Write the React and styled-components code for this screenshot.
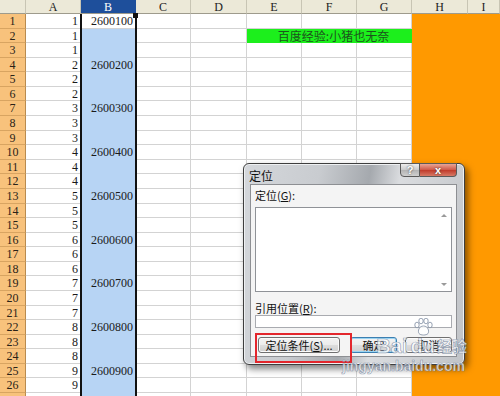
import styled, { createGlobalStyle } from "styled-components";

const GlobalStyle = createGlobalStyle`
  html, body { margin: 0; padding: 0; background: #fff; }
  body { width: 500px; height: 396px; overflow: hidden; }
`;

const Page = styled.div`
  position: relative;
  width: 500px;
  height: 396px;
  overflow: hidden;
  font-family: "Liberation Serif", "Noto Sans CJK SC", serif;
  font-size: 12px;
  color: #1a1a1a;
`;

const Sheet = styled.div`
  display: grid;
  grid-template-columns: 26px 55px 55px 55px 56px 55px 55px 55px 56px 32px;
  grid-template-rows: 14px repeat(27, 14.58px);
`;

const ColHead = styled.div`
  box-sizing: border-box;
  background: ${(p) => (p.$active ? "#1e4f9b" : "#ece9d8")};
  color: ${(p) => (p.$active ? "#fff" : "#222")};
  border-right: 1px solid ${(p) => (p.$active ? "#1e4f9b" : "#c8c5b4")};
  border-bottom: 1px solid #9e9b8c;
  text-align: center;
  line-height: 14px;
`;

const RowHead = styled.div`
  box-sizing: border-box;
  background: #f8c27c;
  border-right: 1px solid #b98b4f;
  border-bottom: 1px solid #d8a461;
  text-align: center;
  line-height: 14px;
  color: #2a2218;
`;

const tones = {
  plain: { bg: "#fff", line: "#d3d3d3" },
  blue: { bg: "#b7d4f4", line: "#b7d4f4" },
  orange: { bg: "#ff9900", line: "#ff9900" },
};

const DataCell = styled.div`
  box-sizing: border-box;
  background: ${(p) => tones[p.$tone].bg};
  border-right: 1px solid ${(p) => tones[p.$tone].line};
  border-bottom: 1px solid ${(p) => tones[p.$tone].line};
  text-align: right;
  padding-right: 2px;
  line-height: 14px;
  white-space: nowrap;
  overflow: hidden;
`;

const MergedCell = styled.div`
  grid-column: span 3;
  background: #1cef1c;
  color: #1d541d;
  font-family: "Noto Sans CJK SC", sans-serif;
  font-size: 12px;
  line-height: 14px;
  text-align: center;
  padding-left: 8px;
  white-space: nowrap;
`;

const Selection = styled.div`
  position: absolute;
  left: 80px;
  top: 14px;
  width: 57px;
  bottom: 0;
  box-sizing: border-box;
  border-left: 2px solid #111;
  border-right: 2px solid #111;
`;

const FillHandle = styled.div`
  position: absolute;
  left: 133px;
  top: 13px;
  width: 5px;
  height: 5px;
  background: #111;
`;

const Dialog = styled.div`
  position: absolute;
  left: 243px;
  top: 163px;
  width: 222px;
  height: 202px;
  box-sizing: border-box;
  border: 1px solid #3e3e3e;
  border-radius: 6px;
  background: linear-gradient(
    100deg,
    #d4d7db 0%,
    #c9ccd0 30%,
    #a5a9ae 50%,
    #dadcdf 62%,
    #c0c3c7 100%
  );
  box-shadow: 3px 4px 7px rgba(0, 0, 0, 0.5), inset 0 0 0 1px #eef0f2;
  display: flex;
  flex-direction: column;
  padding: 0 7px 7px 6px;
  font-family: "Noto Sans CJK SC", sans-serif;
  font-size: 11px;
  color: #111;
`;

const TitleBar = styled.div`
  height: 21px;
  display: flex;
  align-items: flex-start;
  justify-content: space-between;
`;

const Title = styled.div`
  margin: 5px 0 0 -1px;
  font-size: 12px;
  line-height: 14px;
`;

const Caption = styled.div`
  display: flex;
  margin-top: -1px;
`;

const CaptionButton = styled.div`
  width: ${(p) => (p.$close ? "37px" : "20px")};
  height: 14px;
  box-sizing: border-box;
  border: 1px solid #5a5a5a;
  border-left: ${(p) => (p.$close ? "none" : "1px solid #5a5a5a")};
  border-radius: ${(p) => (p.$close ? "0 0 4px 0" : "0 0 0 4px")};
  background: ${(p) =>
    p.$close
      ? "linear-gradient(#e9a596, #cf5746 50%, #c03a2a 51%, #d77a66)"
      : "linear-gradient(#eeeeee, #c9c9c9 50%, #b3b3b3 51%, #cfcfcf)"};
  color: #fff;
  font-family: "Liberation Sans", sans-serif;
  font-weight: bold;
  font-size: 11px;
  line-height: 12px;
  text-align: center;
  text-shadow: 0 0 2px #333;
`;

const Panel = styled.div`
  flex: 1;
  box-sizing: border-box;
  background: #f4f4f4;
  border: 1px solid #8d8f93;
  padding: 3px 4px;
  display: flex;
  flex-direction: column;
`;

const Label = styled.div`
  height: 14px;
  line-height: 14px;
  margin-top: ${(p) => p.$gap || 0}px;
  u { text-decoration: underline; }
`;

const ListBox = styled.div`
  position: relative;
  margin-top: 5px;
  height: 85px;
  box-sizing: border-box;
  background: #fff;
  border: 1px solid #8f9297;
  display: flex;
  justify-content: flex-end;
`;

const ScrollTrack = styled.div`
  width: 14px;
  display: flex;
  flex-direction: column;
  justify-content: space-between;
  align-items: center;
  padding: 6px 0 5px;
`;

const Arrow = styled.div`
  width: 0;
  height: 0;
  border-left: 3px solid transparent;
  border-right: 3px solid transparent;
  ${(p) =>
    p.$down
      ? "border-top: 3px solid #9a9a9a;"
      : "border-bottom: 3px solid #9a9a9a;"}
`;

const TextInput = styled.div`
  height: 13px;
  box-sizing: border-box;
  background: #fff;
  border: 1px solid #a9abb0;
`;

const ButtonRow = styled.div`
  margin-top: 9px;
  padding-left: 3px;
  display: flex;
  gap: 8px;
`;

const Button = styled.div`
  width: ${(p) => p.$w}px;
  height: 16px;
  box-sizing: border-box;
  border: 1px solid ${(p) => (p.$default ? "#3c7fb1" : "#707070")};
  border-radius: 3px;
  background: linear-gradient(#f3f3f3, #ebebeb 50%, #dddddd 51%, #cfcfcf);
  box-shadow: ${(p) => (p.$default ? "inset 0 0 0 1px #9ad4f2" : "inset 0 0 0 1px #fbfbfb")};
  line-height: 14px;
  text-align: center;
  margin-right: ${(p) => p.$after || 0}px;
`;

const Highlight = styled.div`
  position: absolute;
  left: 255px;
  top: 333px;
  width: 97px;
  height: 30px;
  box-sizing: border-box;
  border: 2px solid #e3262c;
`;

const Watermark = styled.div`
  position: absolute;
  left: 342px;
  top: 318px;
  display: flex;
  flex-direction: column;
  align-items: flex-end;
  color: rgba(255, 255, 255, 0.75);
  -webkit-text-stroke: 0.7px rgba(95, 115, 145, 0.65);
  pointer-events: none;
`;

const MarkTop = styled.div`
  display: flex;
  align-items: flex-end;
  height: 38px;
`;

const Word = styled.span`
  font-family: "Liberation Sans", sans-serif;
  font-weight: bold;
  font-size: 20px;
  line-height: 20px;
`;

const PawWrap = styled.div`
  display: flex;
  flex-direction: column;
  align-items: center;
  margin: 0 2px 0 3px;
`;

const Cjk = styled.span`
  font-family: "Noto Sans CJK SC", sans-serif;
  font-weight: bold;
  font-size: 15px;
  line-height: 20px;
`;

const Url = styled.div`
  font-family: "Liberation Sans", sans-serif;
  font-weight: bold;
  font-size: 14px;
  line-height: 16px;
  margin-top: 2px;
  margin-right: 2px;
`;

function Paw() {
  return (
    <svg width="20" height="18" viewBox="0 0 20 18">
      <g fill="rgba(255,255,255,0.85)" stroke="rgba(110,125,150,0.7)" strokeWidth="1">
        <ellipse cx="4" cy="7" rx="2.2" ry="2.8" />
        <ellipse cx="8" cy="3" rx="2.2" ry="2.8" />
        <ellipse cx="13" cy="3" rx="2.2" ry="2.8" />
        <ellipse cx="17" cy="7" rx="2.2" ry="2.8" />
        <path d="M10.5 8 C6 8 4.5 13 6 15.5 C7.5 17.5 13.5 17.5 15 15.5 C16.5 13 15 8 10.5 8 Z" />
      </g>
    </svg>
  );
}

const letters = ["A", "B", "C", "D", "E", "F", "G", "H", "I"];
const rows = Array.from({ length: 27 }, (_, i) => i + 1);
const lastVisible = 26;

function valueA(r) {
  return Math.floor((r - 1) / 3) + 1;
}

function valueB(r) {
  if ((r - 1) % 3 !== 0) return "";
  return String(2600000 + 100 * valueA(r));
}

function SheetRow({ r }) {
  const shown = r <= lastVisible;
  return (
    <>
      <RowHead>{shown ? r : ""}</RowHead>
      <DataCell $tone="plain">{shown ? valueA(r) : ""}</DataCell>
      <DataCell $tone={r === 1 ? "plain" : "blue"}>{shown ? valueB(r) : ""}</DataCell>
      <DataCell $tone="plain" />
      <DataCell $tone="plain" />
      {r === 2 ? (
        <MergedCell>百度经验:小猪也无奈</MergedCell>
      ) : (
        <>
          <DataCell $tone="plain" />
          <DataCell $tone="plain" />
          <DataCell $tone="plain" />
        </>
      )}
      <DataCell $tone="orange" />
      <DataCell $tone="orange" />
    </>
  );
}

export default function App() {
  return (
    <Page>
      <GlobalStyle />
      <Sheet>
        <ColHead />
        {letters.map((l) => (
          <ColHead key={l} $active={l === "B"}>
            {l}
          </ColHead>
        ))}
        {rows.map((r) => (
          <SheetRow key={r} r={r} />
        ))}
      </Sheet>
      <Selection />
      <FillHandle />

      <Dialog>
        <TitleBar>
          <Title>定位</Title>
          <Caption>
            <CaptionButton>?</CaptionButton>
            <CaptionButton $close>x</CaptionButton>
          </Caption>
        </TitleBar>
        <Panel>
          <Label>
            定位(<u>G</u>):
          </Label>
          <ListBox>
            <ScrollTrack>
              <Arrow />
              <Arrow $down />
            </ScrollTrack>
          </ListBox>
          <Label $gap={9}>
            引用位置(<u>R</u>):
          </Label>
          <TextInput />
          <ButtonRow>
            <Button $w={82} $after={2}>
              定位条件(<u>S</u>)...
            </Button>
            <Button $w={47} $default>
              确定
            </Button>
            <Button $w={47}>取消</Button>
          </ButtonRow>
        </Panel>
      </Dialog>
      <Highlight />

      <Watermark>
        <MarkTop>
          <Word>Bai</Word>
          <PawWrap>
            <Paw />
            <Word>du</Word>
          </PawWrap>
          <Cjk>经验</Cjk>
        </MarkTop>
        <Url>jingyan.baidu.com</Url>
      </Watermark>
    </Page>
  );
}
